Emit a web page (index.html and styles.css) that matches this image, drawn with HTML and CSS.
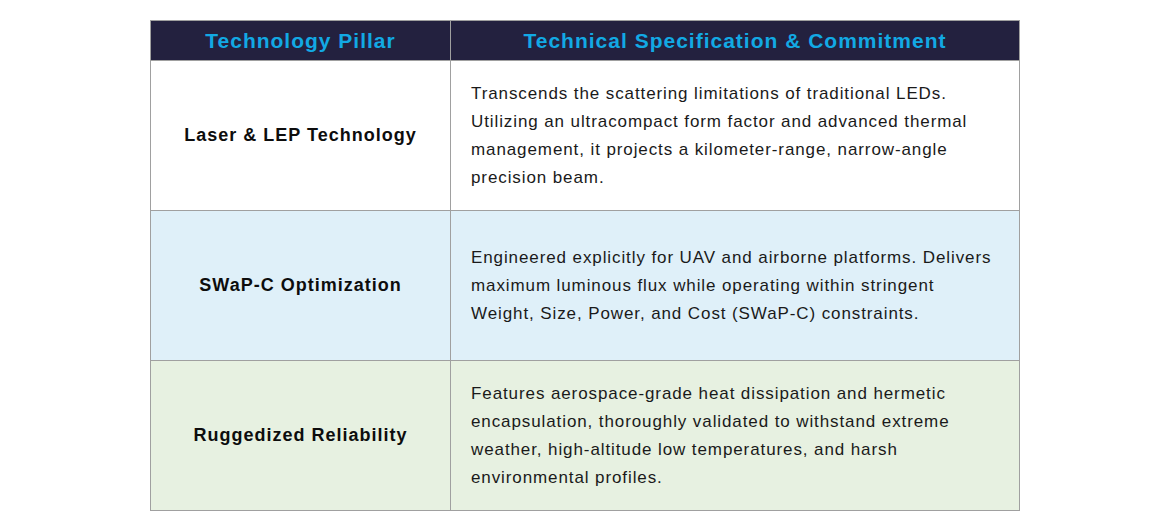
FILE: index.html
```html
<!DOCTYPE html>
<html lang="en">
<head>
<meta charset="utf-8">
<title>Technology Pillars</title>
<link rel="stylesheet" href="styles.css">
</head>
<body>
<table class="spec-table">
  <thead>
    <tr>
      <th class="col-pillar">Technology Pillar</th>
      <th class="col-spec">Technical Specification &amp; Commitment</th>
    </tr>
  </thead>
  <tbody>
    <tr class="row row-white">
      <td class="pillar">Laser &amp; LEP Technology</td>
      <td class="spec">Transcends the scattering limitations of traditional LEDs. Utilizing an ultracompact form factor and advanced thermal management, it projects a kilometer-range, narrow-angle precision beam.</td>
    </tr>
    <tr class="row row-blue">
      <td class="pillar">SWaP-C Optimization</td>
      <td class="spec">Engineered explicitly for UAV and airborne platforms. Delivers maximum luminous flux while operating within stringent Weight, Size, Power, and Cost (SWaP-C) constraints.</td>
    </tr>
    <tr class="row row-green">
      <td class="pillar">Ruggedized Reliability</td>
      <td class="spec">Features aerospace-grade heat dissipation and hermetic encapsulation, thoroughly validated to withstand extreme weather, high-altitude low temperatures, and harsh environmental profiles.</td>
    </tr>
  </tbody>
</table>
</body>
</html>
```
FILE: styles.css
```css
html, body {
  margin: 0;
  padding: 0;
  background: #ffffff;
}
body {
  padding-top: 20px;
  font-family: "Liberation Sans", Arial, sans-serif;
  color: #111111;
}
.spec-table {
  border-collapse: collapse;
  width: 870px;
  margin: 0 auto;
  table-layout: fixed;
}
.spec-table th,
.spec-table td {
  border: 1px solid #a0a0a0;
}
.col-pillar {
  width: 299px;
}
.spec-table th {
  background: #23213f;
  color: #12a9e4;
  font-size: 21px;
  letter-spacing: 1px;
  font-weight: bold;
  height: 39px;
  padding: 0;
  text-align: center;
}
.row td {
  height: 149px;
  padding: 0;
  vertical-align: middle;
}
.pillar {
  text-align: center;
  font-size: 18px;
  letter-spacing: 1px;
  font-weight: bold;
  color: #0d0d0d;
}
.row .spec {
  font-size: 17px;
  letter-spacing: 0.9px;
  line-height: 28px;
  padding: 0 20px 0 20px;
  color: #1a1a1a;
}
.row-white td { background: #ffffff; }
.row-blue td { background: #dff0f9; }
.row-green td { background: #e7f1e1; }
```
